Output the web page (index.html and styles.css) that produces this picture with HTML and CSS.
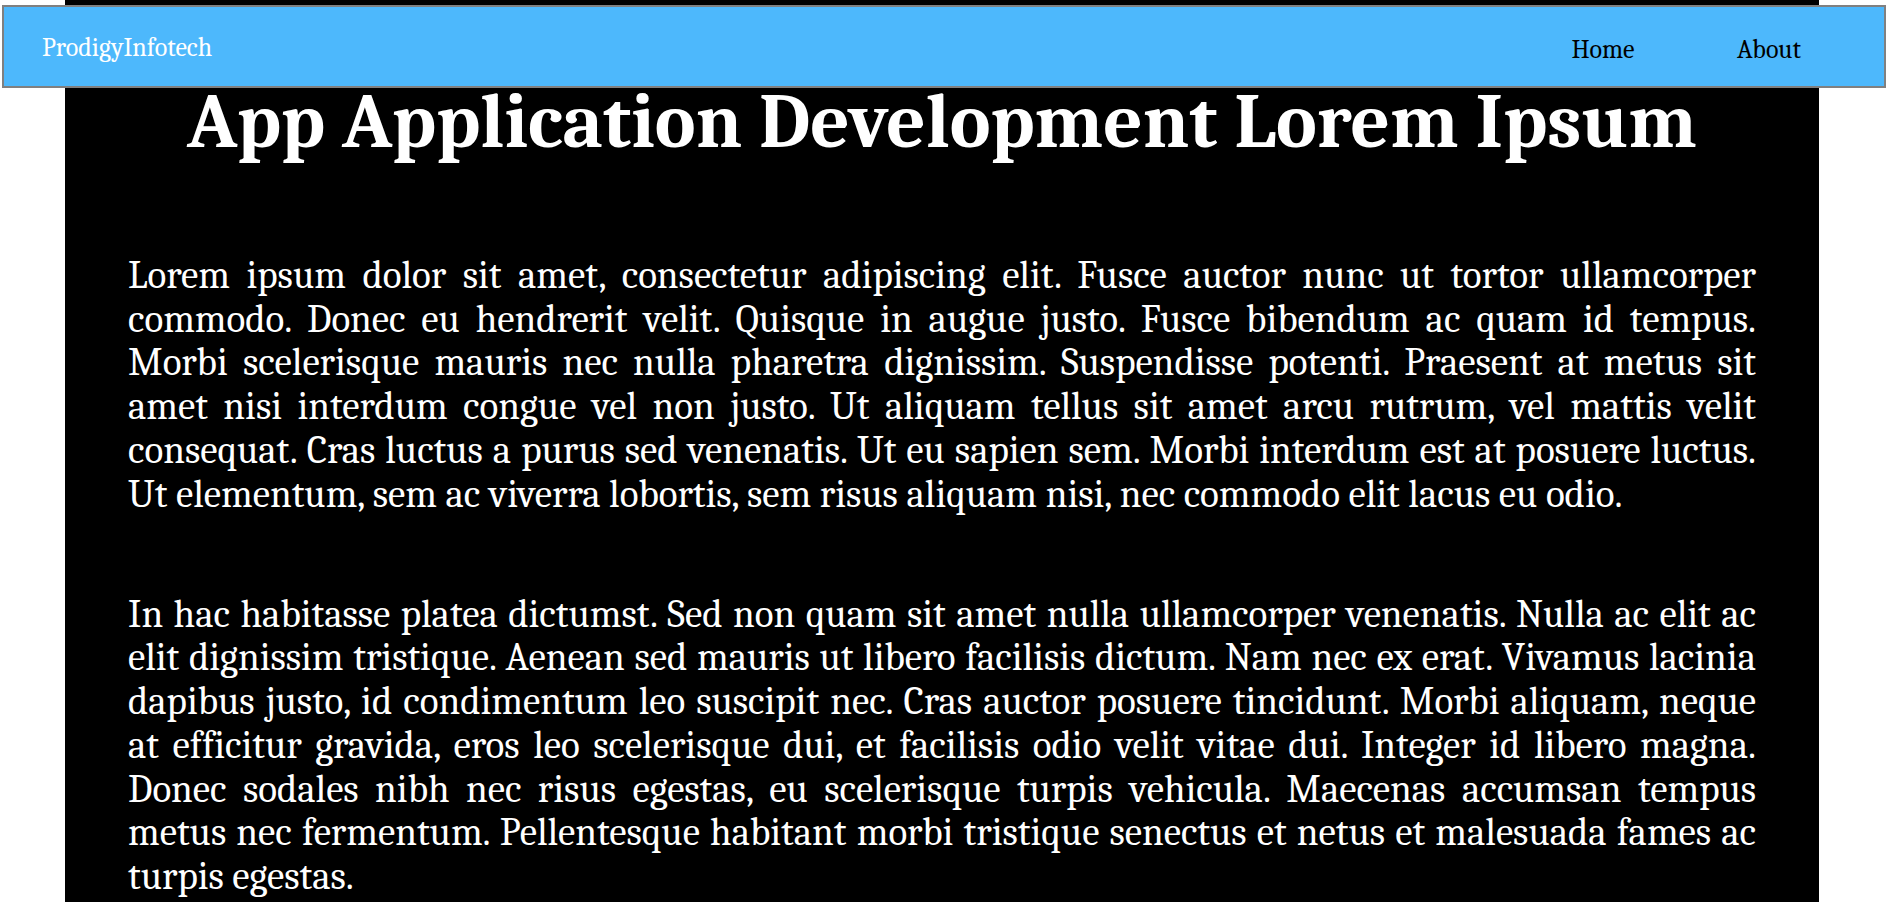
FILE: index.html
```html
<!DOCTYPE html>
<html lang="en">
<head>
<meta charset="utf-8">
<title>ProdigyInfotech</title>
<link rel="stylesheet" href="styles.css">
</head>
<body>
<nav class="navbar">
  <a class="brand" href="#">ProdigyInfotech</a>
  <ul class="nav-links">
    <li><a href="#">Home</a></li>
    <li><a href="#">About</a></li>
  </ul>
</nav>
<main class="page">
  <h1 class="title">App Application Development Lorem Ipsum</h1>
  <p class="text">Lorem ipsum dolor sit amet, consectetur adipiscing elit. Fusce auctor nunc ut tortor ullamcorper commodo. Donec eu hendrerit velit. Quisque in augue justo. Fusce bibendum ac quam id tempus. Morbi scelerisque mauris nec nulla pharetra dignissim. Suspendisse potenti. Praesent at metus sit amet nisi interdum congue vel non justo. Ut aliquam tellus sit amet arcu rutrum, vel mattis velit consequat. Cras luctus a purus sed venenatis. Ut eu sapien sem. Morbi interdum est at posuere luctus. Ut elementum, sem ac viverra lobortis, sem risus aliquam nisi, nec commodo elit lacus eu odio.</p>
  <p class="text">In hac habitasse platea dictumst. Sed non quam sit amet nulla ullamcorper venenatis. Nulla ac elit ac elit dignissim tristique. Aenean sed mauris ut libero facilisis dictum. Nam nec ex erat. Vivamus lacinia dapibus justo, id condimentum leo suscipit nec. Cras auctor posuere tincidunt. Morbi aliquam, neque at efficitur gravida, eros leo scelerisque dui, et facilisis odio velit vitae dui. Integer id libero magna. Donec sodales nibh nec risus egestas, eu scelerisque turpis vehicula. Maecenas accumsan tempus metus nec fermentum. Pellentesque habitant morbi tristique senectus et netus et malesuada fames ac turpis egestas.</p>
</main>
</body>
</html>
```
FILE: styles.css
```css
html, body {
  margin: 0;
  padding: 0;
  background: #ffffff;
  font-family: "Caladea", "Cambria", "DejaVu Serif", serif;
}

.navbar {
  position: fixed;
  top: 5px;
  left: 2px;
  width: 1884px;
  height: 83px;
  box-sizing: border-box;
  border: 2px solid #808080;
  background: #4db8fc;
  display: flex;
  justify-content: space-between;
  align-items: flex-start;
  padding: 0 32px 0 38px;
  z-index: 10;
}

.brand {
  color: #ffffff;
  text-decoration: none;
  font-size: 26px;
  line-height: 30px;
  margin-top: 26px;
}

.nav-links {
  list-style: none;
  margin: 28px 0 0 0;
  padding: 0;
  display: flex;
}

.nav-links li {
  width: 166px;
  text-align: center;
}

.nav-links a {
  color: #000000;
  text-decoration: none;
  font-size: 26px;
  line-height: 30px;
}

.page {
  width: 1754px;
  margin: 0 0 0 65px;
  box-sizing: border-box;
  background: #000000;
  color: #ffffff;
  padding: 79px 63px 40px 63px;
  min-height: 960px;
}

.title {
  margin: 0 0 88px 0;
  font-size: 77px;
  font-weight: bold;
  line-height: 87px;
  text-align: center;
}

.text {
  margin: 0 0 76.5px 0;
  font-size: 39px;
  line-height: 43.7px;
  text-align: justify;
}
```
